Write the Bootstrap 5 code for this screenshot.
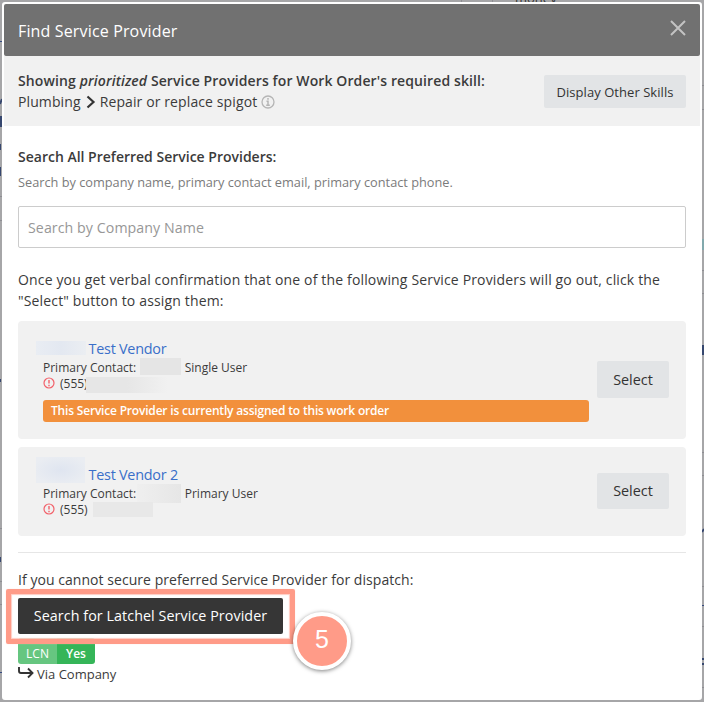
<!DOCTYPE html>
<html lang="en">
<head>
<meta charset="utf-8">
<meta name="viewport" content="width=device-width, initial-scale=1">
<title>Find Service Provider</title>
<link href="https://cdn.jsdelivr.net/npm/bootstrap@5.3.0/dist/css/bootstrap.min.css" rel="stylesheet">
<style>
body{width:704px;height:702px;overflow:hidden;background:#a6a6a8;color:#3b3b3b;font:14px/21px "Open Sans","Noto Sans",sans-serif;padding:2px}
.backdrop{position:absolute;left:0;top:0;z-index:-1}
.dialog{height:698px;border-radius:3px;border:2px solid #fff}
.dialog-top{height:52px;background:#717171;border-radius:2px;color:#fff;padding:2px 13px 0 14px;font-size:16px;letter-spacing:.15px}
.skills{height:70px;background:#f1f1f1;padding:14px 14px 0;letter-spacing:.11px}
.chevron{margin:0 4px 0 5px}
.semi{font-weight:600}
.btn{--bs-btn-border-radius:2px;--bs-btn-border-width:0;--bs-btn-color:#333;padding:0;line-height:20px}
.btn-soft{background:#e2e4e6}
.btn-skills{width:142px;height:33px;margin-top:5px;font-size:13px;letter-spacing:.05px}
.btn-pick{width:72px;height:37px;font-size:14.4px;margin-top:23px}
.vendor-b .btn-pick{height:36px;margin-top:9px}
.main{padding:20px 14px 0}
.hint{font-size:12.75px;line-height:19px;color:#7b7b7b;margin-top:6px}
.form-control{height:42px;margin-top:14px;border-color:#ccc;border-radius:2px;padding:0 10px 0 9px;font-size:14.2px;letter-spacing:.07px}
.form-control::placeholder{color:#979797}
.intro{margin-top:21px;height:42px;letter-spacing:.155px;white-space:nowrap}
.vendor{background:#f1f1f1;border-radius:4px;padding:17px 17px 0 25px}
.vendor-a{height:118px;margin-top:10px}
.vendor-b{height:89px;margin-top:8px}
.vendor-name{font-size:14.4px;line-height:21px;color:#3a6fc9;height:22px;letter-spacing:-.24px}
.meta{font-size:12px;line-height:16px;height:16px}
.alert-dot{flex:none;margin:1px 5px 0 0}
.blur{flex:none;align-self:flex-start}
.b1{width:50px;height:14px;margin:3px 2.500px 0 -7px;background:linear-gradient(90deg,#e9edf3,#e3e8f1 50%,#ebeef2)}
.b2{width:49px;height:26px;margin:-1px 3.500px 0 -7px;background:radial-gradient(#dfe5f0,#eaedf2 80%)}
.vendor-b .b2{margin-top:-7px}
.c1{width:41px;height:17px;margin:-2px 3.500px 0 4px;background:#e5e5e5}
.c2{width:44px;height:19px;margin:-2px 3.500px 0 1px;background:linear-gradient(90deg,#efefef,#e6e6e6)}
.p1{width:82px;height:16px;margin:1px 0 0 -2px;background:linear-gradient(90deg,#e6e6e6 50%,#f1f1f1)}
.p2{width:60px;height:15px;margin-left:5px;background:#e8e8e8}
.assigned{width:546px;height:22px;border-radius:3px;background:#f2903c;color:#fff;font-size:12px;font-weight:600;line-height:22px;letter-spacing:-.19px;padding-left:8px;margin-top:8px}
.rule{height:1px;background:#e6e6e6;margin-top:16px}
.dispatch{letter-spacing:.05px}
.btn-dark{--bs-btn-bg:#363636;--bs-btn-color:#fff;width:265px;height:36px;margin-top:8px;font-size:14.3px;letter-spacing:.07px}
.tag{height:26px;margin-top:4px;width:77px;border-radius:3px;overflow:hidden;color:#fff;font-size:12px;line-height:19px}
.tag span{padding-top:6px}
.t1{width:39px;background:#66c680}.t2{width:38px;background:#35b558;font-weight:600}
.via{font-size:13px;line-height:20px}
.via svg{margin:2px 3px 0 0}
.ring{position:absolute;left:6px;top:589px;width:289px;height:55px;border:5px solid #ff9b88;border-radius:2px;box-shadow:inset 0 0 1px 1px #ffcbc2,0 0 1px #ffcbc2}
.step{position:absolute;left:293px;top:612px;width:58px;height:58px;border-radius:50%;border:4px solid #fff;background:#ff9b88;color:#fff;box-shadow:0 1px 4px rgba(0,0,0,.5);font:25px/46px "Liberation Sans",Arial,sans-serif;text-align:center}
</style>
<script src="https://cdn.jsdelivr.net/npm/bootstrap@5.3.0/dist/js/bootstrap.bundle.min.js"></script>
</head>
<body>
<svg class="backdrop" width="704" height="702" font-family="Open Sans" font-size="13">
<path d="M461.500 0V2M492.500 0V2M0 196.500H2M0 220.500H2M0 528.500H2M0 581.500H2M0 604.500H2M702 85.500h2M702 109.500h2M702 270.500h2M702 293.500h2M702 452.500h2M702 475.500h2M702 586.500h2M702 626.500h2M702 687.500h2" stroke="#8e8e93"/>
<text x="515" y="3" fill="#333">money</text>
<path d="M0 41.500h2M0 672.500h2M702 605.500h2" stroke="#344a80"/>
<path d="M1 116v11M0 167v9M0 379v3M703 345v10M0 557v5M0 144v6M702 532l2-3M702 659h2M702 664h2M0 104l2-5" stroke="#36476f" stroke-width="2"/>
<path d="M703 239v11" stroke="#82a9ad" stroke-width="2"/>
</svg>
<div class="dialog bg-white">
  <header class="dialog-top d-flex align-items-center justify-content-between">
    <span>Find Service Provider</span>
    <svg width="18" height="18" viewBox="0 0 18 18" fill="none" stroke="#c3c3c3" stroke-width="2" class="mb-2"><path d="M2 3l14 14M16 3L2 17"/></svg>
  </header>
  <section class="skills d-flex justify-content-between align-items-start">
    <div>
      <div class="semi">Showing <em>prioritized</em> Service Providers for Work Order's required skill:</div>
      <div class="d-flex align-items-center"><span>Plumbing</span>
        <svg class="chevron" width="10" height="14" viewBox="0 0 10 14" fill="none" stroke="#333" stroke-width="2.200"><path d="M1.500 1.500L7.500 7l-6 5.500"/></svg>
        <span>Repair or replace spigot</span>
        <svg width="14" height="14" viewBox="0 0 14 14" fill="none" stroke="#b5b5b5" class="ms-1"><circle cx="7" cy="7" r="6" stroke-width="1.300"/><path d="M7 3v1.800M5.500 6.200H7V10M5.200 10.200h3.600" stroke-width="1.500"/></svg>
      </div>
    </div>
    <button class="btn btn-soft btn-skills">Display Other Skills</button>
  </section>
  <main class="main">
    <div class="semi">Search All Preferred Service Providers:</div>
    <div class="hint">Search by company name, primary contact email, primary contact phone.</div>
    <input class="form-control" placeholder="Search by Company Name">
    <div class="intro">Once you get verbal confirmation that one of the following Service Providers will go out, click the<br>"Select" button to assign them:</div>
    <article class="vendor vendor-a d-flex justify-content-between align-items-start">
      <div>
        <div class="vendor-name d-flex"><i class="blur b1"></i><span>Test Vendor</span></div>
        <div class="meta d-flex"><span>Primary Contact:</span><i class="blur c1"></i><span>Single User</span></div>
        <div class="meta d-flex"><svg class="alert-dot" width="12" height="12" viewBox="0 0 12 12" fill="none" stroke="#f2616a"><circle cx="6" cy="6" r="5" stroke-width="1.200"/><path d="M6 3v3.500M6 7.800v1.400" stroke-width="1.400"/></svg><span>(555)</span><i class="blur p1"></i></div>
        <div class="assigned">This Service Provider is currently assigned to this work order</div>
      </div>
      <button class="btn btn-soft btn-pick">Select</button>
    </article>
    <article class="vendor vendor-b d-flex justify-content-between align-items-start">
      <div>
        <div class="vendor-name d-flex"><i class="blur b2"></i><span>Test Vendor 2</span></div>
        <div class="meta d-flex"><span>Primary Contact:</span><i class="blur c2"></i><span>Primary User</span></div>
        <div class="meta d-flex"><svg class="alert-dot" width="12" height="12" viewBox="0 0 12 12" fill="none" stroke="#f2616a"><circle cx="6" cy="6" r="5" stroke-width="1.200"/><path d="M6 3v3.500M6 7.800v1.400" stroke-width="1.400"/></svg><span>(555)</span><i class="blur p2"></i></div>
      </div>
      <button class="btn btn-soft btn-pick">Select</button>
    </article>
    <div class="rule"></div>
    <div class="dispatch mt-3">If you cannot secure preferred Service Provider for dispatch:</div>
    <button class="btn btn-dark d-block">Search for Latchel Service Provider</button>
    <div class="tag d-flex text-center"><span class="t1">LCN</span><span class="t2">Yes</span></div>
    <div class="via d-flex"><svg width="16" height="14" viewBox="0 0 16 14" fill="none" stroke="#333" stroke-width="1.900"><path d="M1 1v4q0 2 2 2h11M10 2.500L14.500 7 10 11.500"/></svg><span>Via Company</span></div>
  </main>
</div>
<div class="ring"></div>
<div class="step">5</div>
</body>
</html>
